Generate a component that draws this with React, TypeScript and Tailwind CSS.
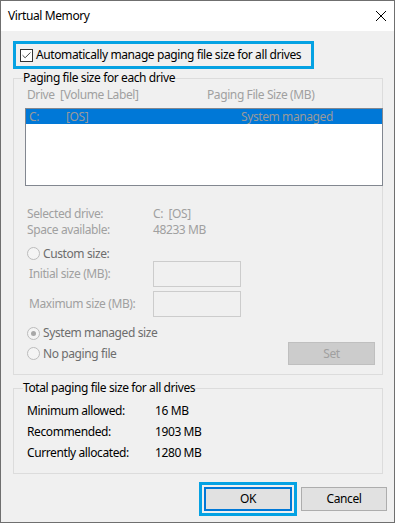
import { Check } from 'lucide-react';

const font = { fontFamily: '"Noto Sans", "Segoe UI", sans-serif' };

function Radio({ checked = false }: { checked?: boolean }) {
  return (
    <span className="flex h-[13px] w-[13px] items-center justify-center rounded-full border border-[#bcbcbc] bg-[#f4f4f4]">
      {checked && <span className="h-[5px] w-[5px] rounded-full bg-[#a8a8a8]" />}
    </span>
  );
}

function GroupBox({ title, children, className }: { title: string; children: React.ReactNode; className?: string }) {
  return (
    <fieldset className={`ml-[12px] w-[370px] min-w-0 border border-[#dcdcdc] ${className ?? ''}`}>
      <legend className="ml-[9px] text-[12px] leading-[16px] text-black">{title}</legend>
      {children}
    </fieldset>
  );
}

export default function App() {
  return (
    <div className="h-[523px] w-[396px] bg-white" style={font}>
      <div className="flex h-[523px] w-[395px] flex-col border border-[#6f6f6f] bg-[#f0f0f0] text-[12px] tracking-[-0.4px]">
        {/* Title bar */}
        <div className="flex h-[30px] items-center justify-between bg-white pl-[7px] pr-[8px]">
          <span className="text-[12px] text-black">Virtual Memory</span>
          <svg width="10" height="10" viewBox="0 0 10 10">
            <path d="M0 0 L10 10 M10 0 L0 10" stroke="#000" strokeWidth="1" />
          </svg>
        </div>

        {/* Auto-manage checkbox */}
        <div className="ml-[12px] mt-[10px] flex h-[28px] w-[301px] items-center border-[3px] border-[#05a2e3] pl-[4px]">
          <span className="flex h-[13px] w-[13px] items-center justify-center border border-[#333] bg-white">
            <Check size={11} strokeWidth={2} color="#333" />
          </span>
          <span className="ml-[3px] whitespace-nowrap leading-[16px] text-black">
            Automatically manage paging file size for all drives
          </span>
        </div>

        <GroupBox title="Paging file size for each drive" className="mt-[1px] pb-[9px]">
          <div className="flex pl-[13px] pt-[1px] leading-[16px] text-[#a0a0a0]">
            <span className="w-[180px] whitespace-pre">Drive  [Volume Label]</span>
            <span>Paging File Size (MB)</span>
          </div>
          <div className="ml-[11px] mt-[5px] h-[78px] w-[358px] border border-[#828790] bg-white">
            <div className="flex h-[15px] items-center bg-[#0078d7] pl-[3px] leading-[15px] text-[#9a9a9a]">
              <span className="w-[37px]">C:</span>
              <span className="w-[175px]">[OS]</span>
              <span>System managed</span>
            </div>
          </div>

          <div className="mt-[20px] pl-[13px] leading-[16px] text-[#a0a0a0]">
            <div className="flex">
              <span className="w-[126px]">Selected drive:</span>
              <span className="whitespace-pre">C:  [OS]</span>
            </div>
            <div className="flex">
              <span className="w-[126px]">Space available:</span>
              <span>48233 MB</span>
            </div>
          </div>

          <div className="mt-[8px] flex h-[15px] items-center pl-[13px] text-[#6d6d6d]">
            <Radio />
            <span className="ml-[3px]">Custom size:</span>
          </div>
          <div className="flex flex-col gap-[4px] pl-[15px] text-[#a0a0a0]">
            <div className="flex h-[26px] items-center">
              <span className="w-[124px]">Initial size (MB):</span>
              <span className="h-[26px] w-[88px] border border-[#cccccc] bg-[#f0f0f0]" />
            </div>
            <div className="flex h-[26px] items-center">
              <span className="w-[124px]">Maximum size (MB):</span>
              <span className="h-[26px] w-[88px] border border-[#cccccc] bg-[#f0f0f0]" />
            </div>
          </div>

          <div className="mt-[8px] flex h-[16px] items-center pl-[13px] text-[#6d6d6d]">
            <Radio checked />
            <span className="ml-[3px]">System managed size</span>
          </div>
          <div className="mt-[1px] flex h-[23px] items-center justify-between pl-[13px] pr-[7px] text-[#6d6d6d]">
            <div className="flex items-center">
              <Radio />
              <span className="ml-[3px]">No paging file</span>
            </div>
            <span className="flex h-[23px] w-[87px] items-center justify-center border border-[#bfbfbf] bg-[#cccccc] text-[#a0a0a0]">
              Set
            </span>
          </div>
        </GroupBox>

        <GroupBox title="Total paging file size for all drives" className="mt-[5px] pb-[10px]">
          <div className="pl-[13px] pt-[4px] text-black">
            {[
              ['Minimum allowed:', '16 MB'],
              ['Recommended:', '1903 MB'],
              ['Currently allocated:', '1280 MB'],
            ].map(([label, value]) => (
              <div key={label} className="flex h-[21px] items-center">
                <span className="w-[128px]">{label}</span>
                <span>{value}</span>
              </div>
            ))}
          </div>
        </GroupBox>

        {/* Dialog buttons */}
        <div className="mr-[7px] mt-[8px] flex items-center justify-end gap-[4px]">
          <div className="border-[3px] border-[#05a2e3] p-[2px]">
            <button className="flex h-[24px] w-[88px] items-center justify-center border-2 border-[#0078d7] bg-[#e1e1e1] text-black">
              OK
            </button>
          </div>
          <button className="flex h-[24px] w-[86px] items-center justify-center border border-[#adadad] bg-[#e1e1e1] text-black">
            Cancel
          </button>
        </div>
      </div>
    </div>
  );
}
